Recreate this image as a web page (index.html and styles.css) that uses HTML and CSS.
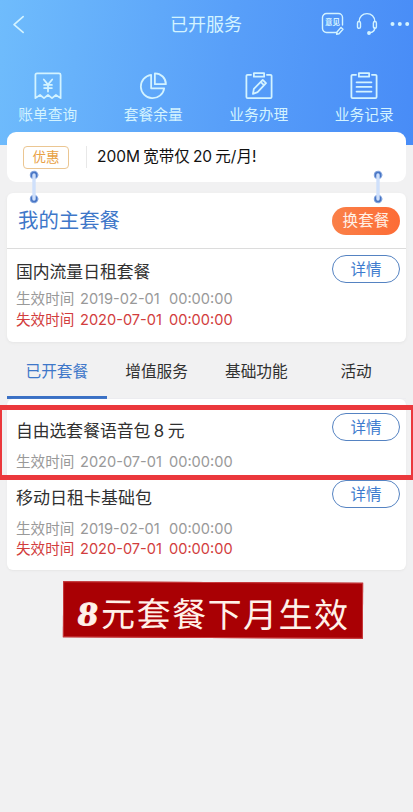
FILE: index.html
```html
<!DOCTYPE html>
<html lang="zh-CN">
<head>
<meta charset="utf-8">
<title>已开服务</title>
<link rel="stylesheet" href="styles.css">
</head>
<body>
<header class="hero">
  <div class="topbar">
    <svg class="back" viewBox="0 0 14 20"><path d="M12 1.5 2.2 10.2 12 18.5"/></svg>
    <h1>已开服务</h1>
    <div class="tools">
      <div class="feedback">
        <svg viewBox="0 0 24 24"><path d="M15.5 20.5H5.5a4 4 0 0 1-4-4v-11a4 4 0 0 1 4-4h12a4 4 0 0 1 4 4V13"/><path d="m16 20 4-4.6 2 1.8-4 4.6-2.4.4z"/></svg>
        <span>意见</span>
      </div>
      <svg class="headset" viewBox="0 0 22 24"><path d="M3.2 9.5C3.2 4.7 6.6 1.6 11 1.6s7.8 3.1 7.8 7.9M18.8 15.5c0 3-1.8 4.8-4.8 5.2"/><rect x="1.5" y="9.5" width="3" height="6.8" rx="1.4"/><rect x="17.4" y="9.5" width="3" height="6.8" rx="1.4"/><circle class="solid" cx="13" cy="21" r="1.2"/></svg>
      <svg class="more" viewBox="0 0 20 6"><circle cx="2.5" cy="3" r="2"/><circle cx="9.8" cy="3" r="2"/><circle cx="17.2" cy="3" r="2"/></svg>
    </div>
  </div>
  <nav class="shortcuts">
    <a><svg viewBox="0 0 30 30"><path d="M1.5 28V3.2Q1.5 1.5 3.2 1.5h23.6Q28.5 1.5 28.5 3.2V28l-5-3.4-4.2 3.4-4.3-3.4-4.3 3.4-4.2-3.4z"/><path d="m10.5 8 4.5 5.5L19.5 8M15 13.5V21M10.800 13.800h8.400M10.800 17.200h8.400"/></svg><span>账单查询</span></a>
    <a><svg viewBox="0 0 30 30"><path d="M13 3A12.600 12.600 0 1 0 27 17.500H13z"/><path d="M17 1.500V13h11.800C28.800 6.500 23.600 1.500 17 1.500z"/></svg><span>套餐余量</span></a>
    <a><svg viewBox="0 0 30 30"><path d="M6.500 3H2.800Q1.500 3 1.500 4.300v22.400Q1.500 28 2.800 28h24.400q1.300 0 1.300-1.300V4.300Q28.500 3 27.200 3h-3.700"/><rect x="9.500" y="1.300" width="11" height="3.700"/><path d="m8.500 23.500 1-5.500 9.500-9.500 3.500 3.500-9 9.500zM17 10.800l3.300 3.300"/></svg><span>业务办理</span></a>
    <a><svg viewBox="0 0 30 30"><path d="M6.500 3H2.800Q1.500 3 1.500 4.300v22.400Q1.500 28 2.800 28h24.400q1.300 0 1.300-1.300V4.300Q28.500 3 27.200 3h-3.700"/><rect x="9.500" y="1.300" width="11" height="3.700"/><path d="M7 11h16M7 16h16M7 21h16"/></svg><span>业务记录</span></a>
  </nav>
</header>

<main>
  <section class="card promo">
    <span class="tag">优惠</span>
    <p>200M<i></i>宽带仅<i></i>20<i></i>元/月!</p>
    <svg class="link left" viewBox="0 0 10 34"><circle cx="5" cy="5" r="3.800"/><circle cx="5" cy="29" r="3.800"/><path d="M5 5v24"/></svg>
    <svg class="link right" viewBox="0 0 10 34"><circle cx="5" cy="5" r="3.800"/><circle cx="5" cy="29" r="3.800"/><path d="M5 5v24"/></svg>
  </section>

  <section class="card plan">
    <div class="plan-head"><h2>我的主套餐</h2><button class="change">换套餐</button></div>
    <article class="service">
      <h3>国内流量日租套餐</h3>
      <p class="date"><span>生效时间</span><span>2019-02-01</span><span>00:00:00</span></p>
      <p class="date expired"><span>失效时间</span><span>2020-07-01</span><span>00:00:00</span></p>
      <button class="detail">详情</button>
    </article>
  </section>

  <nav class="tabs"><a class="active">已开套餐</a><a>增值服务</a><a>基础功能</a><a>活动</a></nav>

  <section class="card list">
    <article class="service voice">
      <h3>自由选套餐语音包<b>8</b>元</h3>
      <p class="date"><span>生效时间</span><span>2020-07-01</span><span>00:00:00</span></p>
      <button class="detail">详情</button>
    </article>
    <article class="service base">
      <h3>移动日租卡基础包</h3>
      <p class="date"><span>生效时间</span><span>2019-02-01</span><span>00:00:00</span></p>
      <p class="date expired"><span>失效时间</span><span>2020-07-01</span><span>00:00:00</span></p>
      <button class="detail">详情</button>
    </article>
    <div class="highlight"></div>
  </section>

  <div class="caption"><b>8</b><span>元套餐下月生效</span></div>
</main>
</body>
</html>
```
FILE: styles.css
```css
* { box-sizing: border-box; margin: 0; padding: 0; }
body {
  width: 413px;
  height: 812px;
  overflow: hidden;
  background: #f1f1f2;
  color: #303030;
  font-family: Inter, "Noto Sans CJK SC", sans-serif;
}
h1, h2, h3 { font-weight: 400; }
svg { display: block; fill: none; stroke: currentColor; stroke-linecap: round; stroke-linejoin: round; }
button { font: inherit; }

.hero {
  height: 145px;
  background: linear-gradient(97deg, #6fbcfc 0%, #589ff9 55%, #488cf7 100%);
  color: #d3f3ff;
}
.topbar {
  display: grid;
  grid-template-columns: 1fr auto 1fr;
  align-items: center;
  height: 48px;
  padding: 0 3px 0 12px;
}
.back { width: 13px; height: 19px; stroke-width: 1.8; }
.topbar h1 { font-size: 18px; line-height: 24px; margin: 2px 0 0 -10px; }
.tools { display: flex; justify-content: flex-end; align-items: center; }
.feedback { position: relative; width: 24px; margin-right: 11px; }
.feedback svg { width: 24px; height: 24px; stroke-width: 1.4; }
.feedback span { position: absolute; left: 4px; top: 6px; font-size: 7.5px; line-height: 10px; font-weight: 700; white-space: nowrap; }
.headset { width: 22px; height: 24px; margin-right: 12px; stroke-width: 1.4; }
.more { width: 20px; height: 6px; fill: currentColor; stroke: none; }
.solid { fill: currentColor; }

.shortcuts { display: flex; padding-top: 24px; margin: 0 -5px; }
.shortcuts a { width: 105.5px; display: flex; flex-direction: column; align-items: center; }
.shortcuts svg { width: 28px; height: 28px; stroke-width: 1.9; }
.shortcuts span { margin-top: 5px; font-size: 14.7px; line-height: 20px; }

main { padding: 0 7px; }
.card { background: #fff; border-radius: 6px; position: relative; }

.promo { height: 50px; margin-top: -13px; border-radius: 9px; display: flex; align-items: center; padding-left: 16px; }
.tag {
  width: 46px; height: 23px;
  border: 1px solid #ebc692; border-radius: 4px;
  color: #e8a145; font-size: 13.5px; line-height: 21px; text-align: center;
}
.promo p { margin-left: 17px; padding-left: 10px; border-left: 1px solid #e8e8e8; font-size: 15.5px; line-height: 22px; color: #111; white-space: nowrap; }
.promo i { display: inline-block; width: 3.2px; }
.link { position: absolute; top: 38px; z-index: 2; width: 10px; height: 34px; }
.link circle { fill: #4674c4; stroke: #7fa2dd; stroke-width: 1; }
.link path { stroke: #cfe0fb; stroke-width: 3.4; }
.link.left { left: 22px; }
.link.right { right: 23px; }

.plan { height: 149px; margin-top: 11px; box-shadow: 0 1px 3px #e5e5e5; }
.plan-head { height: 56px; display: flex; justify-content: space-between; align-items: center; padding: 0 6px 0 11px; border-bottom: 1px solid #dcdcdc; }
.plan-head h2 { font-size: 20.4px; line-height: 28px; color: #3e77c9; }
.change {
  width: 68px; height: 28px; border: 0; border-radius: 14px;
  background: linear-gradient(90deg, #fa8048, #fd6c36);
  color: #fff0e6; font-size: 15.6px; line-height: 28px;
}

.service { position: relative; padding-left: 9px; }
.service h3 { font-size: 16.8px; line-height: 24px; }
.service h3 b { font-weight: 400; margin: 0 3.5px; }
.plan .service { padding-top: 11px; }
.plan .date { line-height: 20.5px; }
.plan h3 + .date { margin-top: 5px; }
.date { display: grid; grid-template-columns: 64px 89px auto; font-size: 14.6px; line-height: 20px; color: #999; white-space: nowrap; }
.expired { color: #d23d3d; }
.detail {
  position: absolute; right: 6px; top: 6px;
  width: 68px; height: 28px;
  border: 1px solid #5583c2; border-radius: 14px;
  background: #fff; color: #3d7bce; font-size: 15.5px; line-height: 25px;
}

.tabs { height: 57px; display: flex; border-bottom: 1px solid #ededf1; }
.tabs a { flex: 1; text-align: center; font-size: 15.7px; line-height: 59px; }
.tabs .active { color: #3e77c9; height: 57px; border-bottom: 3px solid #3a70c5; }

.list { height: 171px; box-shadow: 0 1px 2px #e6e6e6; }
.voice { height: 78px; padding-top: 20px; }
.voice .date { margin-top: 9px; }
.voice .detail { top: 14px; }
.base { padding-top: 9px; }
.base .detail { top: 3px; }
.base h3 { font-size: 17px; }
.base h3 + .date { margin-top: 10px; }
.base .date { line-height: 19.5px; }
.highlight { position: absolute; left: -7px; top: 6px; width: 413px; height: 75px; border: solid #eb383c; border-width: 5px 2px; }

.caption {
  width: 300px; height: 56px; margin: 12px 0 0 56px;
  display: flex; align-items: center; padding: 10px 0 0 15px;
  background: #a90004; border: 1px solid #c83a3d;
  color: #fff1e9; transform: rotate(.3deg); white-space: nowrap;
}
.caption b { width: 22px; font: 700 34px/44px "Liberation Serif", serif; -webkit-text-stroke: .8px currentColor; transform: translateX(1px) skewX(-7deg) scaleX(1.2); }
.caption span { font-size: 34px; line-height: 44px; letter-spacing: 1.5px; font-weight: 400; }
```
